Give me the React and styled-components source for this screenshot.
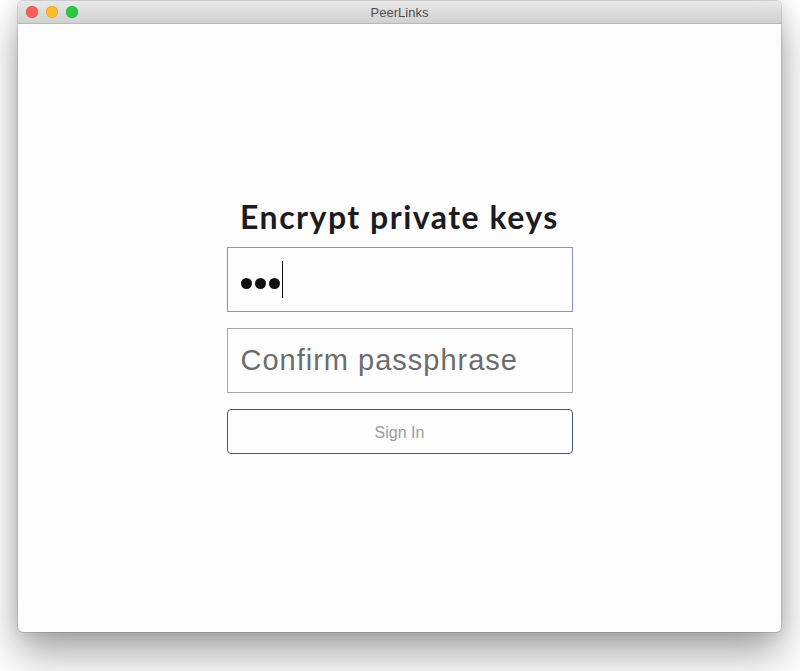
import React from 'react';
import styled, { createGlobalStyle } from 'styled-components';

const GlobalStyle = createGlobalStyle`
  html, body {
    margin: 0;
    padding: 0;
    background: #ffffff;
  }
  body {
    width: 800px;
    height: 671px;
    overflow: hidden;
  }
`;

const Stage = styled.div`
  width: 800px;
  height: 671px;
  padding: 1px 19px 0 18px;
  box-sizing: border-box;
`;

const Window = styled.div`
  width: 763px;
  height: 631px;
  display: flex;
  flex-direction: column;
  background: #fefdfe;
  border-radius: 5px;
  overflow: hidden;
  box-shadow: 0 0 0 1px rgba(0, 0, 0, 0.12), 0 22px 40px rgba(0, 0, 0, 0.35), 0 0 18px rgba(0, 0, 0, 0.12);
`;

const TitleBar = styled.div`
  position: relative;
  height: 22px;
  flex-shrink: 0;
  display: flex;
  align-items: center;
  justify-content: center;
  background: linear-gradient(#e9e8e9, #d2d1d2);
  border-bottom: 1px solid #b9b8b9;
  font-family: "Liberation Sans", Arial, sans-serif;
  font-size: 13px;
  color: #4d4d4d;
`;

const Lights = styled.div`
  position: absolute;
  left: 8px;
  top: 5px;
  display: flex;
  gap: 8px;
`;

const Light = styled.span`
  width: 12px;
  height: 12px;
  border-radius: 50%;
  background: ${p => p.color};
  box-shadow: inset 0 0 0 0.5px ${p => p.edge};
`;

const Content = styled.div`
  flex: 1;
  display: flex;
  align-items: center;
  justify-content: center;
`;

const Form = styled.div`
  width: 346px;
  display: flex;
  flex-direction: column;
  align-items: stretch;
  margin-top: -6px;
`;

const Heading = styled.h1`
  margin: 0 0 10px;
  text-align: center;
  font-family: Lato, "Noto Sans", sans-serif;
  font-weight: 700;
  font-size: 32px;
  line-height: 40px;
  color: #1c1c1e;
  letter-spacing: 1.5px;
`;

const Field = styled.div`
  height: 65px;
  box-sizing: border-box;
  border: 1px solid ${p => (p.focused ? '#8d90c4' : '#a7a7a7')};
  display: flex;
  align-items: center;
  padding: 0 13px;
  margin-bottom: 16px;
  font-family: "Liberation Sans", Arial, sans-serif;
  font-size: 29px;
  letter-spacing: 1px;
  color: ${p => (p.placeholder ? '#6c6c6c' : '#111')};
`;

const Dots = styled.span`
  display: flex;
  gap: 3px;
  margin-top: 8px;
`;

const Dot = styled.span`
  width: 11px;
  height: 11px;
  border-radius: 50%;
  background: #111;
`;

const Caret = styled.span`
  width: 1px;
  height: 37px;
  margin-left: 2px;
  background: #111;
`;

const Button = styled.button`
  height: 45px;
  border: 1px solid #4d5180;
  border-radius: 4px;
  background: #fefdfe;
  font-family: "Liberation Sans", Arial, sans-serif;
  font-size: 16px;
  color: #9c9c9c;
  padding: 3px 0 0;
`;

export default function App() {
  return (
    <Stage>
      <GlobalStyle />
      <Window>
        <TitleBar>
          <Lights>
            <Light color="#fc5f57" edge="#de4a43" />
            <Light color="#fdbb2e" edge="#de9e21" />
            <Light color="#28c840" edge="#1eab2f" />
          </Lights>
          PeerLinks
        </TitleBar>
        <Content>
          <Form>
            <Heading>Encrypt private keys</Heading>
            <Field focused>
              <Dots>
                <Dot />
                <Dot />
                <Dot />
              </Dots>
              <Caret />
            </Field>
            <Field placeholder>Confirm passphrase</Field>
            <Button>Sign In</Button>
          </Form>
        </Content>
      </Window>
    </Stage>
  );
}
